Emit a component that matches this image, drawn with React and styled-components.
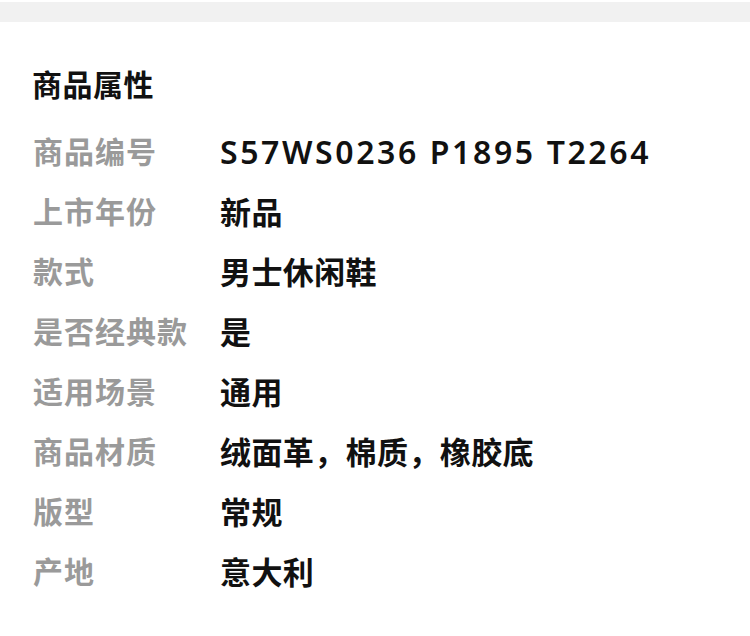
import styled, { createGlobalStyle } from 'styled-components'

const attrs = [
    ['商品编号', 'S57WS0236 P1895 T2264', true],
    ['上市年份', '新品'],
    ['款式', '男士休闲鞋'],
    ['是否经典款', '是'],
    ['适用场景', '通用'],
    ['商品材质', '绒面革，棉质，橡胶底'],
    ['版型', '常规'],
    ['产地', '意大利'],
]

function App() {
    return (
        <Page>
            <GlobalStyle />
            <TopBand />
            <Section>
                <Title>商品属性</Title>
                <List>
                    {attrs.map(([label, value, code]) => (
                        <Row key={label}>
                            <Label>{label}</Label>
                            <Value $code={code}>{value}</Value>
                        </Row>
                    ))}
                </List>
            </Section>
        </Page>
    )
}

export default App

const GlobalStyle = createGlobalStyle`
  body {
    margin: 0;
    background: #fff;
    font-family: "Noto Sans", "Noto Sans CJK SC", sans-serif;
  }
`

const Page = styled.div`
  width: 750px;
  height: 636px;
  background: #fff;
  overflow: hidden;
`

const TopBand = styled.div`
  margin-top: 2px;
  height: 20px;
  background: #f1f1f1;
`

const Section = styled.section`
  padding: 43px 32px 0 32px;
`

const Title = styled.h2`
  margin: 0 0 17px 0;
  font-size: 30px;
  line-height: 40px;
  font-weight: 700;
  letter-spacing: 0.5px;
  color: #111;
`

const List = styled.div`
  display: flex;
  flex-direction: column;
`

const Row = styled.div`
  display: grid;
  grid-template-columns: 188px 1fr;
  align-items: center;
  height: 60px;
`

const Label = styled.span`
  font-size: 30px;
  line-height: 40px;
  font-weight: 700;
  letter-spacing: 1px;
  color: #9a9a9a;
  padding-left: 1px;
`

const Value = styled.span`
  font-size: ${p => (p.$code ? '32px' : '31px')};
  letter-spacing: ${p => (p.$code ? '2.6px' : '0.4px')};
  font-weight: ${p => (p.$code ? 600 : 700)};
  line-height: 40px;
  color: #111;
`
